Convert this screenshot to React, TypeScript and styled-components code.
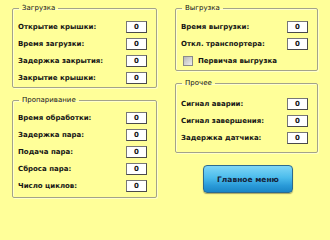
import React from 'react'
import styled, { createGlobalStyle } from 'styled-components'

const GlobalStyle = createGlobalStyle`
  html, body {
    margin: 0;
    padding: 0;
    background: #ffff99;
  }
  body {
    font-family: "DejaVu Sans", Verdana, sans-serif;
    color: #1a1a1a;
  }
`

const Screen = styled.div`
  width: 330px;
  height: 203px;
  box-sizing: border-box;
  padding: 3px 12px 0 12px;
  display: flex;
  gap: 18px;
  background: #ffff99;
`

const Column = styled.div<{ width: number }>`
  width: ${({ width }) => width}px;
  display: flex;
  flex-direction: column;
  gap: 7px;
`

const Group = styled.fieldset<{ top?: number; bottom?: number }>`
  margin: 0;
  padding: ${({ top = 5 }) => top}px 9px ${({ bottom = 2 }) => bottom}px 5px;
  border: 1px solid #a3a38a;
  border-radius: 2px;
  box-shadow: 1px 1px 0 #ffffcc inset, 1px 1px 0 #ffffcc;
  min-width: 0;
`

const Legend = styled.legend`
  margin-left: 1px;
  padding: 0 3px;
  font-size: 7px;
  line-height: 10px;
  font-weight: 400;
  color: #111;
`

const Row = styled.div`
  height: 17px;
  display: flex;
  align-items: center;
  justify-content: space-between;
`

const Label = styled.span`
  font-size: 7px;
  font-weight: 700;
  color: #151515;
  white-space: nowrap;
`

const ValueBox = styled.div`
  width: 19px;
  height: 10px;
  background: #fff;
  border: 1px solid #4a4a4a;
  border-top-color: #777;
  border-left-color: #777;
  font-size: 7px;
  font-weight: 700;
  line-height: 10px;
  text-align: center;
  color: #111;
`

const CheckRow = styled.label`
  height: 17px;
  display: flex;
  align-items: center;
  gap: 5px;
  padding-left: 2px;
`

const CheckBox = styled.span`
  width: 8px;
  height: 8px;
  border: 1px solid #8a8a8a;
  background: linear-gradient(135deg, #b8b8b8 0%, #d8d8d8 60%, #eeeeee 100%);
`

const ButtonWrap = styled.div`
  display: flex;
  justify-content: center;
  padding-top: 5px;
  padding-left: 3px;
`

const MainButton = styled.button`
  width: 90px;
  height: 28px;
  border: 1px solid #2c6a8e;
  border-radius: 4px;
  background: linear-gradient(180deg, #7fd6f6 0%, #4bbcec 45%, #2a9ad8 75%, #1a86c6 100%);
  box-shadow: 0 1px 1px rgba(0, 0, 0, 0.35);
  font-family: "DejaVu Sans", Verdana, sans-serif;
  font-size: 7.5px;
  font-weight: 700;
  color: #14233a;
  padding: 0;
`

type Field = { label: string; value: number }

const loading: Field[] = [
  { label: 'Открытие крышки:', value: 0 },
  { label: 'Время загрузки:', value: 0 },
  { label: 'Задержка закрытия:', value: 0 },
  { label: 'Закрытие крышки:', value: 0 },
]

const steaming: Field[] = [
  { label: 'Время обработки:', value: 0 },
  { label: 'Задержка пара:', value: 0 },
  { label: 'Подача пара:', value: 0 },
  { label: 'Сброса пара:', value: 0 },
  { label: 'Число циклов:', value: 0 },
]

const unloading: Field[] = [
  { label: 'Время выгрузки:', value: 0 },
  { label: 'Откл. транспортера:', value: 0 },
]

const other: Field[] = [
  { label: 'Сигнал аварии:', value: 0 },
  { label: 'Сигнал завершения:', value: 0 },
  { label: 'Задержка датчика:', value: 0 },
]

const Fields = ({ items }: { items: Field[] }) => (
  <>
    {items.map((f) => (
      <Row key={f.label}>
        <Label>{f.label}</Label>
        <ValueBox>{f.value}</ValueBox>
      </Row>
    ))}
  </>
)

export default function App() {
  return (
    <Screen>
      <GlobalStyle />
      <Column width={145}>
        <Group top={5} bottom={1}>
          <Legend>Загрузка</Legend>
          <Fields items={loading} />
        </Group>
        <Group top={4} bottom={3}>
          <Legend>Пропаривание</Legend>
          <Fields items={steaming} />
        </Group>
      </Column>
      <Column width={143}>
        <Group top={5} bottom={1}>
          <Legend>Выгрузка</Legend>
          <Fields items={unloading} />
          <CheckRow>
            <CheckBox />
            <Label>Первичая выгрузка</Label>
          </CheckRow>
        </Group>
        <Group top={7} bottom={6}>
          <Legend>Прочее</Legend>
          <Fields items={other} />
        </Group>
        <ButtonWrap>
          <MainButton>Главное меню</MainButton>
        </ButtonWrap>
      </Column>
    </Screen>
  )
}
